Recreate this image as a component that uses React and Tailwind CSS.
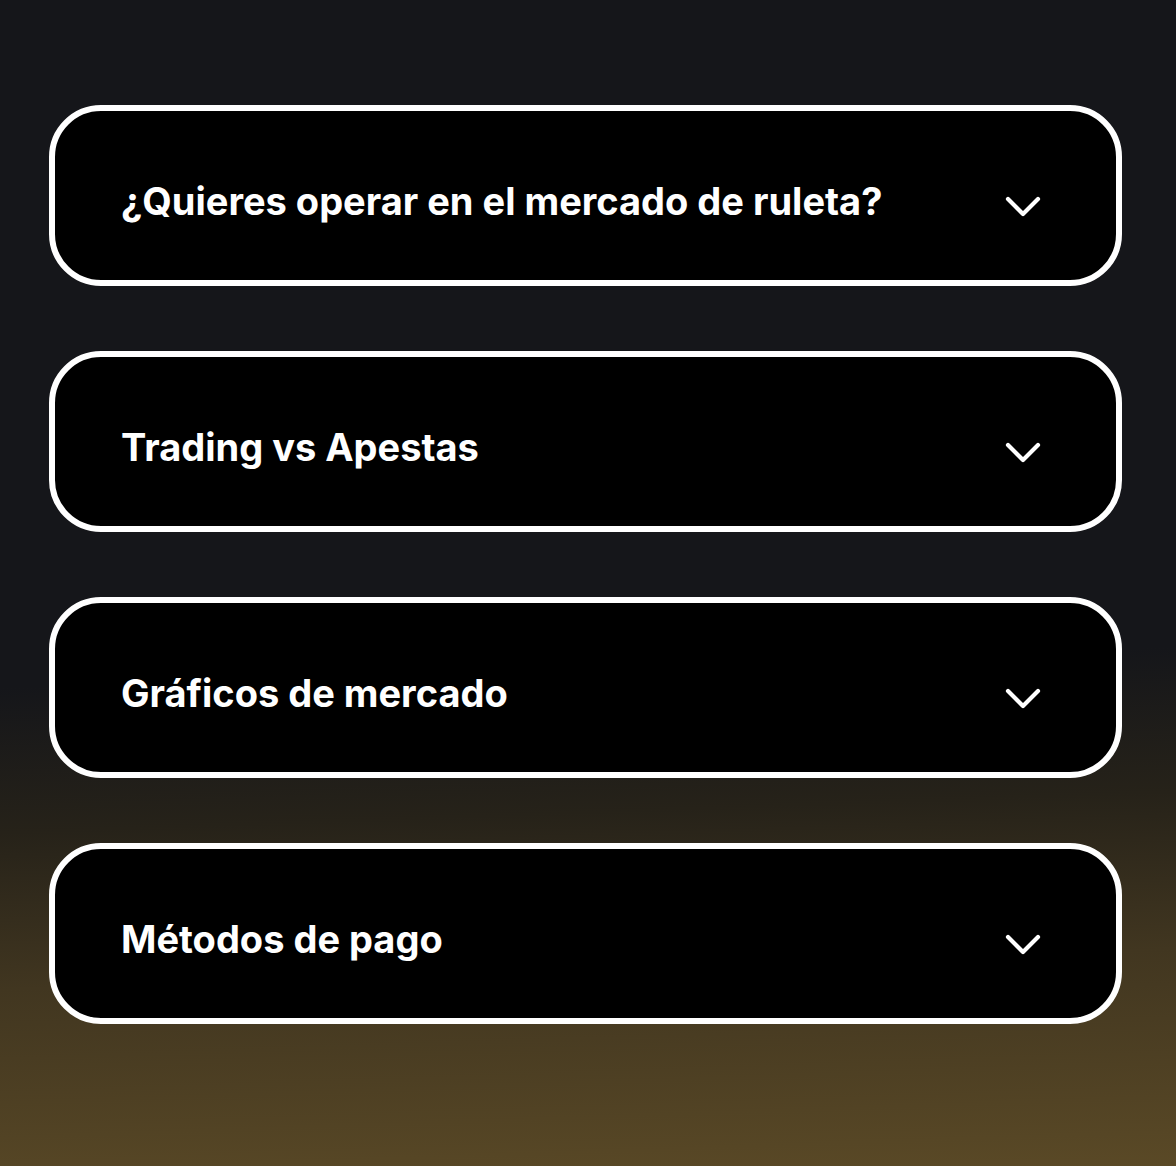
const items = [
  '¿Quieres operar en el mercado de ruleta?',
  'Trading vs Apestas',
  'Gráficos de mercado',
  'Métodos de pago',
];

function Chevron() {
  return (
    <svg width="36" height="22" viewBox="0 0 36 22" fill="none" className="shrink-0 mt-[12px]">
      <path d="M3 3 L18 18 L33 3" stroke="white" strokeWidth="4.2" strokeLinecap="round" strokeLinejoin="round" />
    </svg>
  );
}

export default function App() {
  return (
    <div className="min-h-[1166px] w-full bg-[linear-gradient(178deg,#15161a_0%,#15161a_57%,#262219_69%,#413620_82%,#5a4926_100%)] font-['Inter',sans-serif]">
      <div className="flex flex-col gap-[65px] pt-[105px] pl-[49px]">
        {items.map((q) => (
          <div
            key={q}
            className="w-[1073px] h-[181px] bg-black border-[6px] border-white rounded-[52px] flex items-center justify-between pl-[66px] pr-[75px] pt-[10px]"
          >
            <span className="text-white text-[38px] font-bold leading-none">{q}</span>
            <Chevron />
          </div>
        ))}
      </div>
    </div>
  );
}
